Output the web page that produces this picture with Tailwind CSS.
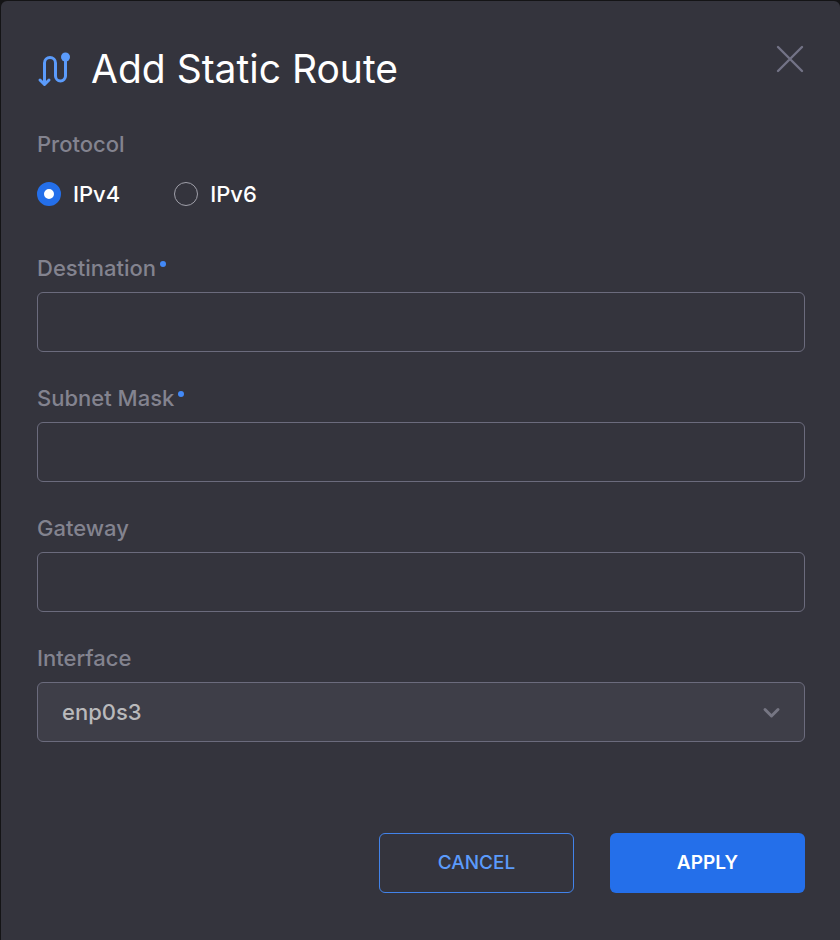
<!DOCTYPE html>
<html lang="en">
<head>
<meta charset="utf-8">
<meta name="viewport" content="width=device-width, initial-scale=1">
<title>Add Static Route</title>
<script src="https://cdn.jsdelivr.net/npm/@tailwindcss/browser@4"></script>
</head>
<body class="min-h-screen bg-[#141416] pt-px pl-px font-['Inter','Liberation_Sans',sans-serif] flex">
<main role="dialog" aria-labelledby="title" class="relative grow rounded-t-md bg-[#34343d] pr-[35px] pl-9 pt-11 pb-[46px]">
  <button type="button" aria-label="Close" class="absolute right-9 top-11 text-[#737386]">
    <svg class="size-7" viewBox="0 0 28 28" fill="none" stroke="currentColor" stroke-width="2.400" stroke-linecap="round"><path d="M2 2L26 26M26 2L2 26"/></svg>
  </button>
  <header class="flex h-12 items-center gap-[18px]">
    <svg class="h-9 w-9 shrink-0 text-[#5b9bfb]" viewBox="0 0 36 36" fill="none" stroke="currentColor" stroke-width="3" stroke-linecap="round" stroke-linejoin="round"><path d="M7.500 33V12a5.500 5.500 0 0 1 11 0V25a5 5 0 0 0 10 0V7M3 29l4.500 4.500L12 29"/><circle cx="28.500" cy="6" r="4.500" fill="currentColor" stroke="none"/></svg>
    <h1 id="title" class="text-[39px] leading-12 text-white">Add Static Route</h1>
  </header>
  <form>
    <fieldset class="mt-[35px]">
      <legend class="h-8 text-[22px] leading-8 font-medium text-[#83838f]">Protocol</legend>
      <div class="mt-[18px] flex h-8 items-center gap-[54px] text-[22px] leading-8 font-medium text-white">
        <label class="flex items-center gap-3"><input type="radio" name="protocol" checked class="size-6 appearance-none rounded-full border border-[#8b8b96] checked:border-[7px] checked:border-[#246fea] checked:bg-white">IPv4</label>
        <label class="flex items-center gap-3"><input type="radio" name="protocol" class="size-6 appearance-none rounded-full border border-[#a0a0aa] checked:border-[7px] checked:border-[#246fea] checked:bg-white">IPv6</label>
      </div>
    </fieldset>
    <div class="mt-[42px] flex flex-col gap-[30px]">
      <div class="flex flex-col gap-2">
        <label for="destination" class="flex gap-1 text-[22px] leading-8 font-medium text-[#83838f]">Destination<span class="mt-[9px] size-1.5 rounded-full bg-[#4289f7]"></span></label>
        <input id="destination" type="text" required class="h-15 w-full rounded-md border border-[#6b6b7d] px-6 text-[22px] text-white">
      </div>
      <div class="flex flex-col gap-2">
        <label for="mask" class="flex gap-1 text-[22px] leading-8 font-medium text-[#83838f]">Subnet Mask<span class="mt-[9px] size-1.5 rounded-full bg-[#4289f7]"></span></label>
        <input id="mask" type="text" required class="h-15 w-full rounded-md border border-[#6b6b7d] px-6 text-[22px] text-white">
      </div>
      <div class="flex flex-col gap-2">
        <label for="gateway" class="text-[22px] leading-8 font-medium text-[#83838f]">Gateway</label>
        <input id="gateway" type="text" class="h-15 w-full rounded-md border border-[#6b6b7d] px-6 text-[22px] text-white">
      </div>
      <div class="flex flex-col gap-2">
        <label for="interface" class="text-[22px] leading-8 font-medium text-[#83838f]">Interface</label>
        <div class="relative">
          <select id="interface" class="h-15 w-full appearance-none rounded-md border border-[#6b6b7d] bg-[#3e3e48] px-6 text-[22px] font-medium text-[#b9b9bb]"><option>enp0s3</option></select>
          <svg class="pointer-events-none absolute top-5 right-6 size-5 text-[#767683]" viewBox="0 0 20 20" fill="none" stroke="currentColor" stroke-width="3" stroke-linecap="round" stroke-linejoin="round"><path d="M4 7.500l6.500 6.500L17 7.500"/></svg>
        </div>
      </div>
    </div>
    <div class="mt-[91px] flex justify-end gap-9">
      <button type="button" class="h-15 w-[195px] rounded-md border border-[#4283ea] text-[19px] font-medium text-[#5b9bfb]">CANCEL</button>
      <button type="submit" class="h-15 w-[195px] rounded-md bg-[#246fea] text-[19px] font-semibold text-white">APPLY</button>
    </div>
  </form>
</main>
</body>
</html>
